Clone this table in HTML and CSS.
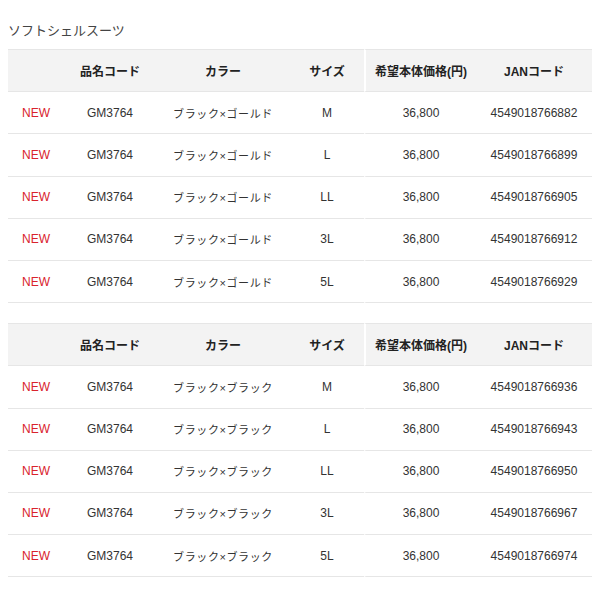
FILE: index.html
```html
<!DOCTYPE html>
<html lang="ja">
<head>
<meta charset="utf-8">
<link rel="stylesheet" href="styles.css">
</head>
<body>
<h2 class="title">ソフトシェルスーツ</h2>
<table class="spec">
<thead><tr><th></th><th>品名コード</th><th>カラー</th><th>サイズ</th><th class="sep">希望本体価格(円)</th><th>JANコード</th></tr></thead>
<tbody>
<tr><td class="new">NEW</td><td>GM3764</td><td class="jp">ブラック×ゴールド</td><td>M</td><td class="sep">36,800</td><td>4549018766882</td></tr>
<tr><td class="new">NEW</td><td>GM3764</td><td class="jp">ブラック×ゴールド</td><td>L</td><td class="sep">36,800</td><td>4549018766899</td></tr>
<tr><td class="new">NEW</td><td>GM3764</td><td class="jp">ブラック×ゴールド</td><td>LL</td><td class="sep">36,800</td><td>4549018766905</td></tr>
<tr><td class="new">NEW</td><td>GM3764</td><td class="jp">ブラック×ゴールド</td><td>3L</td><td class="sep">36,800</td><td>4549018766912</td></tr>
<tr><td class="new">NEW</td><td>GM3764</td><td class="jp">ブラック×ゴールド</td><td>5L</td><td class="sep">36,800</td><td>4549018766929</td></tr>
</tbody>
</table>
<table class="spec">
<thead><tr><th></th><th>品名コード</th><th>カラー</th><th>サイズ</th><th class="sep">希望本体価格(円)</th><th>JANコード</th></tr></thead>
<tbody>
<tr><td class="new">NEW</td><td>GM3764</td><td class="jp">ブラック×ブラック</td><td>M</td><td class="sep">36,800</td><td>4549018766936</td></tr>
<tr><td class="new">NEW</td><td>GM3764</td><td class="jp">ブラック×ブラック</td><td>L</td><td class="sep">36,800</td><td>4549018766943</td></tr>
<tr><td class="new">NEW</td><td>GM3764</td><td class="jp">ブラック×ブラック</td><td>LL</td><td class="sep">36,800</td><td>4549018766950</td></tr>
<tr><td class="new">NEW</td><td>GM3764</td><td class="jp">ブラック×ブラック</td><td>3L</td><td class="sep">36,800</td><td>4549018766967</td></tr>
<tr><td class="new">NEW</td><td>GM3764</td><td class="jp">ブラック×ブラック</td><td>5L</td><td class="sep">36,800</td><td>4549018766974</td></tr>
</tbody>
</table>
</body>
</html>
```
FILE: styles.css
```css
body {
  margin: 0;
  padding: 0 8px;
  background: #fff;
  color: #333;
  font-family: "Liberation Sans", Arial, "Noto Sans CJK JP", sans-serif;
}
.title {
  margin: 0;
  padding-top: 21px;
  height: 28px;
  font-size: 13px;
  font-weight: normal;
  line-height: 18px;
  color: #444;
  font-family: "Noto Sans CJK JP", sans-serif;
}
.spec {
  width: 584px;
  border-collapse: separate;
  border-spacing: 0;
  table-layout: fixed;
  margin-bottom: 20px;
}
.spec th, .spec td {
  height: 41.2px;
  padding: 0;
  text-align: center;
  vertical-align: middle;
  border-bottom: 1px solid #e6e6e6;
  font-size: 12px;
}
.spec th {
  background: #f3f3f3;
  border-top: 1px solid #e6e6e6;
  font-weight: bold;
  color: #222;
  font-family: "Liberation Sans", "Noto Sans CJK JP", sans-serif;
}
.spec th:nth-child(1), .spec td:nth-child(1) { width: 56px; }
.spec th:nth-child(2), .spec td:nth-child(2) { width: 92px; }
.spec th:nth-child(3), .spec td:nth-child(3) { width: 134px; }
.spec th:nth-child(4), .spec td:nth-child(4) { width: 74px; }
.spec th:nth-child(5), .spec td:nth-child(5) { width: 110px; }
.spec .sep { border-left: 2px solid #fff; }
.spec td.new { color: #d9232d; }
.spec td.jp {
  font-family: "Liberation Sans", "Noto Sans CJK JP", sans-serif;
  font-size: 11px;
  letter-spacing: 0.6px;
  font-weight: normal;
  color: #333;
}
```
